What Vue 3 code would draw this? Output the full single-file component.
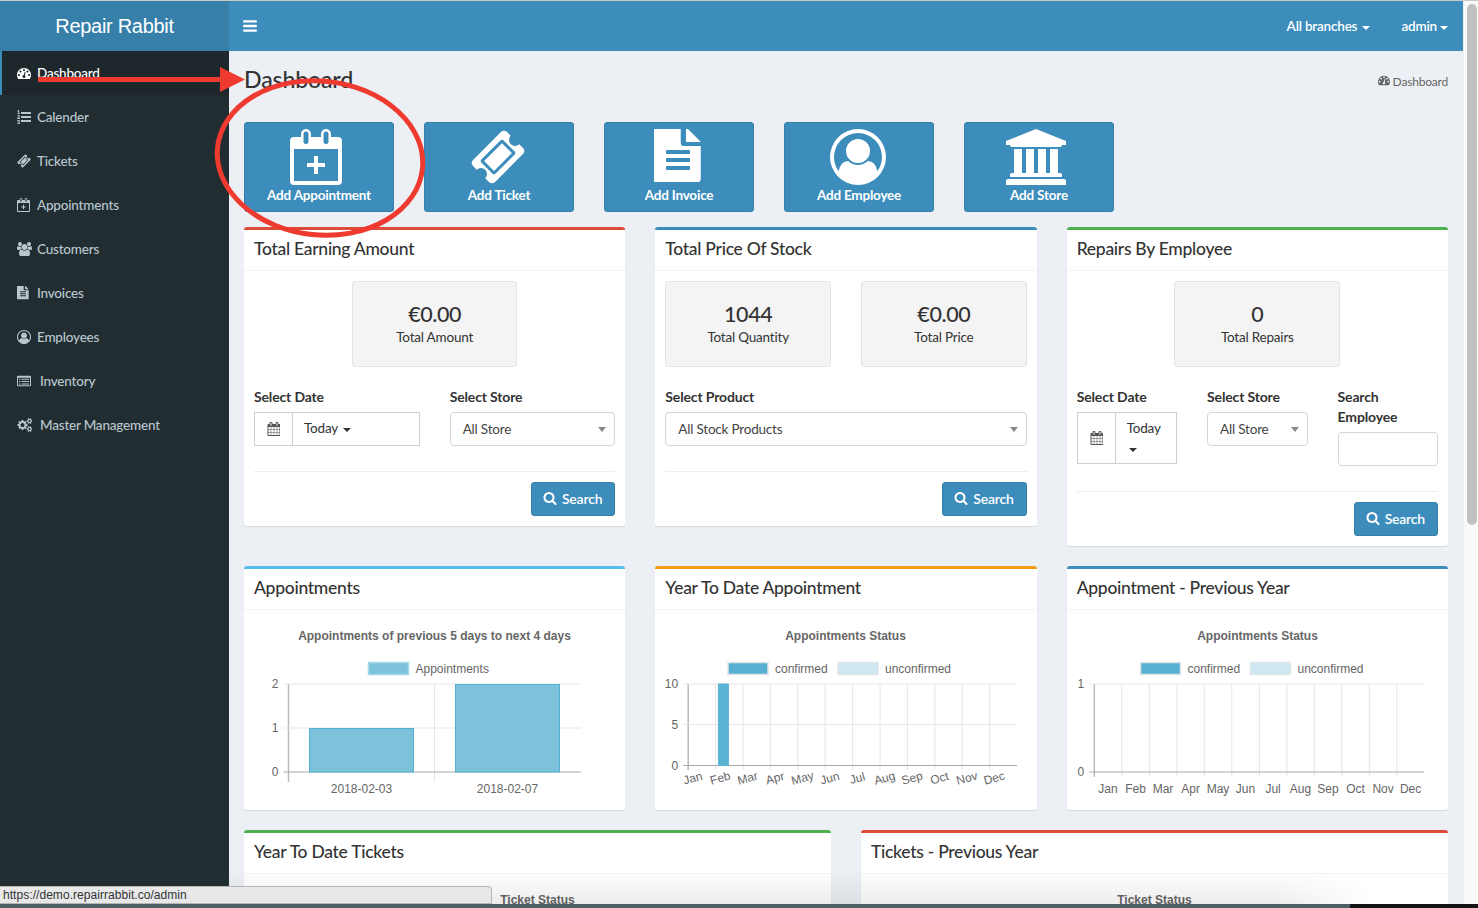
<script setup>
import { h } from 'vue';

// font-awesome style glyphs, all on a 1792 high box
const glyphs = {
  dashboard: [1792, 'M384 1152q0-53-37.5-90.5t-90.5-37.5-90.5 37.5-37.5 90.5 37.5 90.5 90.5 37.5 90.5-37.5 37.5-90.5zm192-448q0-53-37.5-90.5t-90.5-37.5-90.5 37.5-37.5 90.5 37.5 90.5 90.5 37.5 90.5-37.5 37.5-90.5zm428 481l101-382q6-26-7.5-48.5t-38.5-29.5-48 6.5-30 39.5l-101 382q-60 5-107 43.5t-63 98.5q-20 77 20 146t117 89 146-20 89-117q16-60-6-117t-72-91zm660-33q0-53-37.5-90.5t-90.5-37.5-90.5 37.5-37.5 90.5 37.5 90.5 90.5 37.5 90.5-37.5 37.5-90.5zm-640-640q0-53-37.5-90.5t-90.5-37.5-90.5 37.5-37.5 90.5 37.5 90.5 90.5 37.5 90.5-37.5 37.5-90.5zm448 192q0-53-37.5-90.5t-90.5-37.5-90.5 37.5-37.5 90.5 37.5 90.5 90.5 37.5 90.5-37.5 37.5-90.5zm320 448q0 261-141 483-19 29-54 29h-1402q-35 0-54-29-141-221-141-483 0-182 71-348t191-286 286-191 348-71 348 71 286 191 191 286 71 348z'],
  listOl: [1792, 'M381 1620q0 80-54.5 126t-135.5 46q-106 0-172-66l57-88q49 45 106 45 29 0 50.5-14.5t21.5-42.5q0-64-105-56l-26-56q8-10 32.5-43.5t42.5-54 37-38.5v-1q-16 0-48.5 1t-48.5 1v53h-106v-152h333v88l-95 115q51 12 81 49t30 88zm2-627v159h-362q-6-36-6-54 0-51 23.5-93t56.5-68 66-47.5 56.5-43.5 23.5-45q0-25-14.5-38.5t-39.5-13.5q-46 0-81 58l-85-59q24-51 71.5-79.5t105.5-28.5q73 0 123 41.5t50 112.5q0 50-34 91.5t-75 64.5-75.5 50.5-35.5 52.5h127v-60h105zm1409 319v192q0 13-9.5 22.5t-22.5 9.5h-1216q-13 0-22.5-9.5t-9.5-22.5v-192q0-14 9-23t23-9h1216q13 0 22.5 9.5t9.5 22.5zm-1408-899v99h-335v-99h107q0-41 .5-122t.5-121v-12h-2q-8 17-50 54l-71-76 136-127h106v404h108zm1408 387v192q0 13-9.5 22.5t-22.5 9.5h-1216q-13 0-22.5-9.5t-9.5-22.5v-192q0-14 9-23t23-9h1216q13 0 22.5 9.5t9.5 22.5zm0-512v192q0 13-9.5 22.5t-22.5 9.5h-1216q-13 0-22.5-9.5t-9.5-22.5v-192q0-13 9.5-22.5t22.5-9.5h1216q13 0 22.5 9.5t9.5 22.5z'],
  ticket: [1792, 'M1024 452l316 316-572 572-316-316zm-211 979l618-618q19-19 19-45t-19-45l-362-362q-18-18-45-18t-45 18l-618 618q-19 19-19 45t19 45l362 362q18 18 45 18t45-18zm889-637l-907 908q-37 37-90.5 37t-90.5-37l-126-126q56-56 56-136t-56-136-136-56-136 56l-125-126q-37-37-37-90.5t37-90.5l907-906q37-37 90.5-37t90.5 37l125 125q-56 56-56 136t56 136 136 56 136-56l126 125q37 37 37 90.5t-37 90.5z'],
  calendarPlus: [1664, 'M128 256H1536a128 128 0 0 1 128 128V1664a128 128 0 0 1-128 128H128a128 128 0 0 1-128-128V384a128 128 0 0 1 128-128zM128 640V1664H1536V640zM768 864h128v224h224v128h-224v224h-128v-224h-224v-128h224zM352 256V160a160 160 0 0 1 320 0V256H592V160a80 80 0 0 0-160 0V256zM432 256H592V400a80 80 0 0 1-160 0zM992 256V160a160 160 0 0 1 320 0V256H1232V160a80 80 0 0 0-160 0V256zM1072 256H1232V400a80 80 0 0 1-160 0z', 'evenodd'],
  users: [1920, 'M593 896q-162 5-265 128h-134q-82 0-138-40.5t-56-118.5q0-353 124-353 6 0 43.5 21t97.5 42.5 119 21.5q67 0 133-23-5 37-5 66 0 139 81 256zm1071 637q0 120-73 189.5t-194 69.5h-874q-121 0-194-69.5t-73-189.5q0-53 3.5-103.5t14-109 26.5-108.5 43-97.5 62-81 85.5-53.5 111.5-20q10 0 43 21.5t73 48 107 48 135 21.5 135-21.5 107-48 73-48 43-21.5q61 0 111.5 20t85.5 53.5 62 81 43 97.5 26.5 108.5 14 109 3.5 103.5zm-1024-1277q0 106-75 181t-181 75-181-75-75-181 75-181 181-75 181 75 75 181zm704 384q0 159-112.5 271.5t-271.5 112.5-271.5-112.5-112.5-271.5 112.5-271.5 271.5-112.5 271.5 112.5 112.5 271.5zm576 225q0 78-56 118.5t-138 40.5h-134q-103-123-265-128 81-117 81-256 0-29-5-66 66 23 133 23 59 0 119-21.5t97.5-42.5 43.5-21q124 0 124 353zm-128-609q0 106-75 181t-181 75-181-75-75-181 75-181 181-75 181 75 75 181z'],
  file: [1536, 'M1468 380q14 14 28 36h-472v-472q22 14 36 28zm-476 164h504v1056q0 40-28 68t-68 28h-1344q-40 0-68-28t-28-68v-1600q0-40 28-68t68-28h800v544q0 40 28 68t68 28zm160 736v-64q0-14-9-23t-23-9h-704q-14 0-23 9t-9 23v64q0 14 9 23t23 9h704q14 0 23-9t9-23zm0-256v-64q0-14-9-23t-23-9h-704q-14 0-23 9t-9 23v64q0 14 9 23t23 9h704q14 0 23-9t9-23zm0-256v-64q0-14-9-23t-23-9h-704q-14 0-23 9t-9 23v64q0 14 9 23t23 9h704q14 0 23-9t9-23z'],
  userCircle: [1792, 'M896 0q182 0 348 71t286 191 191 286 71 348q0 181-70.5 347t-190.5 286-286 191.5-349 71.5-349-71-285.5-191.5-190.5-286-71-347.5 71-348 191-286 286-191 348-71zm619 1351q149-205 149-455 0-156-61-298t-164-245-245-164-298-61-298 61-245 164-164 245-61 298q0 250 149 455 66-327 306-327 131 128 313 128t313-128q240 0 306 327zm-235-647q0-159-112.5-271.5t-271.5-112.5-271.5 112.5-112.5 271.5 112.5 271.5 271.5 112.5 271.5-112.5 112.5-271.5z'],
  listAlt: [1792, 'M128 224H1664a128 128 0 0 1 128 128V1440a128 128 0 0 1-128 128H128a128 128 0 0 1-128-128V352a128 128 0 0 1 128-128zM128 480V1440H1664V480zM256 592h192v128H256zM576 592h960v128H576zM256 896h192v128H256zM576 896h960v128H576zM256 1200h192v128H256zM576 1200h960v128H576z', 'evenodd'],
  cogs: [1920, 'M960 896q0-106-75-181t-181-75-181 75-75 181 75 181 181 75 181-75 75-181zm768 512q0-52-38-90t-90-38-90 38-38 90q0 53 37.5 90.5t90.5 37.5 90.5-37.5 37.5-90.5zm0-1024q0-52-38-90t-90-38-90 38-38 90q0 53 37.5 90.5t90.5 37.5 90.5-37.5 37.5-90.5zm-384 421v185q0 10-7 19.5t-16 10.5l-155 24q-11 35-32 76 34 48 90 115 7 11 7 20 0 12-7 19-23 30-82.5 89.5t-78.5 59.5q-11 0-21-7l-115-90q-37 19-77 31-11 108-23 155-7 24-30 24h-186q-11 0-20-7.5t-10-17.5l-23-153q-34-10-75-31l-118 89q-7 7-20 7-11 0-21-8-144-133-144-160 0-9 7-19 10-14 41-53t47-61q-23-44-35-82l-152-24q-10-1-17-9.5t-7-19.5v-185q0-10 7-19.5t16-10.5l155-24q11-35 32-76-34-48-90-115-7-11-7-20 0-12 7-20 22-30 82-89t79-59q11 0 21 7l115 90q34-18 77-32 11-108 23-154 7-24 30-24h186q11 0 20 7.5t10 17.5l23 153q34 10 75 31l118-89q8-7 20-7 11 0 21 8 144 133 144 160 0 8-7 19-12 16-42 54t-45 60q23 48 34 82l152 23q10 2 17 10.5t7 19.5zm640 533v140q0 16-149 31-12 27-30 52 51 113 51 138 0 4-4 7-122 71-124 71-8 0-46-47t-52-68q-20 2-30 2t-30-2q-14 21-52 68t-46 47q-2 0-124-71-4-3-4-7 0-25 51-138-18-25-30-52-149-15-149-31v-140q0-16 149-31 13-29 30-52-51-113-51-138 0-4 4-7 4-2 35-20t59-34 30-16q8 0 46 46.5t52 67.5q20-2 30-2t30 2q51-71 92-112l6-2q4 0 124 70 4 3 4 7 0 25-51 138 17 23 30 52 149 15 149 31zm0-1024v140q0 16-149 31-12 27-30 52 51 113 51 138 0 4-4 7-122 71-124 71-8 0-46-47t-52-68q-20 2-30 2t-30-2q-14 21-52 68t-46 47q-2 0-124-71-4-3-4-7 0-25 51-138-18-25-30-52-149-15-149-31v-140q0-16 149-31 13-29 30-52-51-113-51-138 0-4 4-7 4-2 35-20t59-34 30-16q8 0 46 46.5t52 67.5q20-2 30-2t30 2q51-71 92-112l6-2q4 0 124 70 4 3 4 7 0 25-51 138 17 23 30 52 149 15 149 31z'],
  bars: [1792, 'M1664 1344v128q0 26-19 45t-45 19h-1408q-26 0-45-19t-19-45v-128q0-26 19-45t45-19h1408q26 0 45 19t19 45zm0-512v128q0 26-19 45t-45 19h-1408q-26 0-45-19t-19-45v-128q0-26 19-45t45-19h1408q26 0 45 19t19 45zm0-512v128q0 26-19 45t-45 19h-1408q-26 0-45-19t-19-45v-128q0-26 19-45t45-19h1408q26 0 45 19t19 45z'],
  search: [1792, 'M1216 832q0-185-131.5-316.5t-316.5-131.5-316.5 131.5-131.5 316.5 131.5 316.5 316.5 131.5 316.5-131.5 131.5-316.5zm512 832q0 52-38 90t-90 38q-54 0-90-38l-343-342q-179 124-399 124-143 0-273.5-55.5t-225-150-150-225-55.5-273.5 55.5-273.5 150-225 225-150 273.5-55.5 273.5 55.5 225 150 150 225 55.5 273.5q0 220-124 399l343 343q37 37 37 90z'],
  calendar: [1664, 'M192 1664h288v-288h-288v288zm352 0h320v-288h-320v288zm-352-352h288v-320h-288v320zm352 0h320v-320h-320v320zm-352-384h288v-288h-288v288zm736 736h320v-288h-320v288zm-384-736h320v-288h-320v288zm768 736h288v-288h-288v288zm-384-352h320v-320h-320v320zm-352-864v-288q0-13-9.5-22.5t-22.5-9.5h-64q-13 0-22.5 9.5t-9.5 22.5v288q0 13 9.5 22.5t22.5 9.5h64q13 0 22.5-9.5t9.5-22.5zm736 864h288v-320h-288v320zm-384-384h320v-288h-320v288zm384 0h288v-288h-288v288zm32-480v-288q0-13-9.5-22.5t-22.5-9.5h-64q-13 0-22.5 9.5t-9.5 22.5v288q0 13 9.5 22.5t22.5 9.5h64q13 0 22.5-9.5t9.5-22.5zm384-64v1280q0 52-38 90t-90 38h-1408q-52 0-90-38t-38-90v-1280q0-52 38-90t90-38h128v-96q0-66 47-113t113-47h64q66 0 113 47t47 113v96h384v-96q0-66 47-113t113-47h64q66 0 113 47t47 113v96h128q52 0 90 38t38 90z'],
  bank: [2048, 'M960 0l960 384v128h-128q0 26-20.5 45t-48.5 19h-1526q-28 0-48.5-19t-20.5-45h-128v-128zm-704 640h256v768h128v-768h256v768h128v-768h256v768h128v-768h256v768h59q28 0 48.5 19t20.5 45v64h-1664v-64q0-26 20.5-45t48.5-19h59v-768zm1595 960q28 0 48.5 19t20.5 45v128h-1920v-128q0-26 20.5-45t48.5-19h1782z'],
};

const Icon = (props) => {
  const [w, d, rule] = glyphs[props.name];
  return h('svg', {
    width: (props.size * w) / 1792,
    height: props.size,
    viewBox: `0 0 ${w} 1792`,
    fill: 'currentColor',
  }, [h('path', { d, 'fill-rule': rule || 'nonzero' })]);
};
Icon.props = ['name', 'size'];

const menu = [
  { label: 'Dashboard', icon: 'dashboard', active: true },
  { label: 'Calender', icon: 'listOl' },
  { label: 'Tickets', icon: 'ticket' },
  { label: 'Appointments', icon: 'calendarPlus' },
  { label: 'Customers', icon: 'users' },
  { label: 'Invoices', icon: 'file' },
  { label: 'Employees', icon: 'userCircle' },
  { label: 'Inventory', icon: 'listAlt', wide: true },
  { label: 'Master Management', icon: 'cogs', wide: true },
];

const shortcuts = [
  { label: 'Add Appointment', icon: 'calendarPlus' },
  { label: 'Add Ticket', icon: 'ticket' },
  { label: 'Add Invoice', icon: 'file' },
  { label: 'Add Employee', icon: 'userCircle' },
  { label: 'Add Store', icon: 'bank' },
];

const months = ['Jan', 'Feb', 'Mar', 'Apr', 'May', 'Jun', 'Jul', 'Aug', 'Sep', 'Oct', 'Nov', 'Dec'];
const confirmed = { fill: '#58b1d1', stroke: '#dfe5e8' };
const unconfirmed = { fill: '#cfe8f3', stroke: '#dfe5e8' };

function monthChart(title, left, right, yTicks, bars, legendX, tilted, tickEnd) {
  const step = (right - left) / 12;
  return {
    title, left, right, yTicks, bars, tickEnd,
    legend: [
      { x: legendX, label: 'confirmed', ...confirmed },
      { x: legendX + 110, label: 'unconfirmed', ...unconfirmed },
    ],
    vLines: Array.from({ length: 12 }, (_, i) => left + step * i),
    xLabels: months.map((text, i) => tilted
      ? { text, x: left + step * (i + 0.5) - 8, y: 172, rotate: -15 }
      : { text, x: left + step * (i + 0.5), y: 183, rotate: 0 }),
  };
}

const charts = [
  {
    title: 'Appointments of previous 5 days to next 4 days',
    left: 44.5,
    right: 337,
    tickEnd: 172,
    legend: [{ x: 124.500, label: 'Appointments', fill: '#7cc2da', stroke: '#a5d8e8' }],
    yTicks: [{ y: 74, text: '2' }, { y: 118, text: '1' }, { y: 162, text: '0' }],
    vLines: [44.5, 190.5],
    bars: [
      { x: 65.5, w: 104, y: 118.5, h: 43.5, fill: '#7cc2da', stroke: '#53b0d0' },
      { x: 211.5, w: 104, y: 74.5, h: 87.5, fill: '#7cc2da', stroke: '#53b0d0' },
    ],
    xLabels: [
      { text: '2018-02-03', x: 117.5, y: 183, rotate: 0 },
      { text: '2018-02-07', x: 263.5, y: 183, rotate: 0 },
    ],
  },
  monthChart('Appointments Status', 33.2, 362, [
    { y: 74, text: '10' }, { y: 114.5, text: '5' }, { y: 155.5, text: '0' },
  ], [{ x: 63.4, w: 10, y: 74, h: 81.5, fill: '#5ab3d3', stroke: '#5ab3d3' }], 73, true, 160),
  monthChart('Appointments Status', 27.3, 357.3, [
    { y: 74, text: '1' }, { y: 162, text: '0' },
  ], [], 73.5, false, 167),
];

const chartBoxes = [
  { title: 'Appointments', color: '#55bdf0', chart: charts[0] },
  { title: 'Year To Date Appointment', color: '#f39c12', chart: charts[1] },
  { title: 'Appointment - Previous Year', color: '#3c8dbc', chart: charts[2] },
];
</script>

<template>
  <div class="page">
    <div class="chrome-top"></div>
    <div class="shell">
      <aside class="sidebar">
        <div class="logo">Repair Rabbit</div>
        <nav>
          <a v-for="item in menu" :key="item.label" class="menu-item" :class="{ active: item.active, wide: item.wide }">
            <span class="menu-icon"><Icon :name="item.icon" :size="14" /></span>
            <span>{{ item.label }}</span>
          </a>
        </nav>
      </aside>

      <main class="main">
        <header class="navbar">
          <Icon class="toggle" name="bars" :size="16" />
          <div class="nav-right">
            <span class="nav-link">All branches <i class="caret"></i></span>
            <span class="nav-link">admin<i class="caret tight"></i></span>
          </div>
        </header>

        <div class="content">
          <div class="content-head">
            <h1>Dashboard</h1>
            <span class="crumb"><Icon name="dashboard" :size="12" /> Dashboard</span>
          </div>

          <div class="shortcuts">
            <a v-for="s in shortcuts" :key="s.label" class="shortcut">
              <Icon :name="s.icon" :size="56" />
              <span>{{ s.label }}</span>
            </a>
          </div>

          <div class="grid-3 first-row">
            <section class="box" style="border-top-color: #dd4b39">
              <h3 class="box-title">Total Earning Amount</h3>
              <div class="box-body">
                <div class="stats">
                  <div class="stat"><strong>€0.00</strong><span>Total Amount</span></div>
                </div>
                <div class="fields">
                  <div class="field">
                    <label>Select Date</label>
                    <div class="date-group">
                      <span class="date-icon"><Icon name="calendar" :size="14" /></span>
                      <span class="date-btn">Today <i class="caret dark"></i></span>
                    </div>
                  </div>
                  <div class="field">
                    <label>Select Store</label>
                    <div class="select">All Store<i class="arrow"></i></div>
                  </div>
                </div>
                <hr />
                <div class="actions"><button class="btn"><Icon name="search" :size="14" /> Search</button></div>
              </div>
            </section>

            <section class="box" style="border-top-color: #3c8dbc">
              <h3 class="box-title">Total Price Of Stock</h3>
              <div class="box-body">
                <div class="stats">
                  <div class="stat"><strong>1044</strong><span>Total Quantity</span></div>
                  <div class="stat"><strong>€0.00</strong><span>Total Price</span></div>
                </div>
                <div class="fields">
                  <div class="field">
                    <label>Select Product</label>
                    <div class="select">All Stock Products<i class="arrow"></i></div>
                  </div>
                </div>
                <hr />
                <div class="actions"><button class="btn"><Icon name="search" :size="14" /> Search</button></div>
              </div>
            </section>

            <section class="box" style="border-top-color: #4caf50">
              <h3 class="box-title">Repairs By Employee</h3>
              <div class="box-body">
                <div class="stats">
                  <div class="stat"><strong>0</strong><span>Total Repairs</span></div>
                </div>
                <div class="fields">
                  <div class="field">
                    <label>Select Date</label>
                    <div class="date-group">
                      <span class="date-icon"><Icon name="calendar" :size="14" /></span>
                      <span class="date-btn">Today <i class="caret dark"></i></span>
                    </div>
                  </div>
                  <div class="field">
                    <label>Select Store</label>
                    <div class="select">All Store<i class="arrow"></i></div>
                  </div>
                  <div class="field">
                    <label>Search Employee</label>
                    <input class="text-input" type="text" />
                  </div>
                </div>
                <hr />
                <div class="actions"><button class="btn"><Icon name="search" :size="14" /> Search</button></div>
              </div>
            </section>
          </div>

          <div class="grid-3 chart-row">
            <section v-for="b in chartBoxes" :key="b.title" class="box" :style="{ borderTopColor: b.color }">
              <h3 class="box-title">{{ b.title }}</h3>
              <svg class="chart" width="100%" height="200">
                <text class="chart-title" :x="190.5" y="30" text-anchor="middle">{{ b.chart.title }}</text>
                <g v-for="l in b.chart.legend" :key="l.label">
                  <rect :x="l.x" y="52.5" width="40" height="12" :fill="l.fill" :stroke="l.stroke" stroke-width="1.5" />
                  <text class="chart-text" :x="l.x + 47" y="63">{{ l.label }}</text>
                </g>
                <line v-for="(x, i) in b.chart.vLines" :key="'v' + i" :x1="x" :x2="x" y1="74" :y2="b.chart.tickEnd"
                  :stroke="i === 0 ? '#bbb' : '#e6e6e6'" :stroke-width="i === 0 ? 1.5 : 1" />
                <g v-for="t in b.chart.yTicks" :key="t.text">
                  <line :x1="b.chart.left - 5" :x2="b.chart.right" :y1="t.y" :y2="t.y"
                    :stroke="t.text === '0' ? '#a8a8a8' : '#e6e6e6'" />
                  <text class="chart-text" :x="b.chart.left - 10" :y="t.y + 4" text-anchor="end">{{ t.text }}</text>
                </g>
                <rect v-for="(bar, i) in b.chart.bars" :key="'b' + i" :x="bar.x" :y="bar.y" :width="bar.w" :height="bar.h"
                  :fill="bar.fill" :stroke="bar.stroke" />
                <text v-for="t in b.chart.xLabels" :key="t.text" class="chart-text" :x="t.x" :y="t.y" text-anchor="middle"
                  :transform="t.rotate ? `rotate(${t.rotate} ${t.x} ${t.y})` : null">{{ t.text }}</text>
              </svg>
            </section>
          </div>

          <div class="grid-2">
            <section class="box" style="border-top-color: #4caf50">
              <h3 class="box-title">Year To Date Tickets</h3>
              <div class="ticket-status">Ticket Status</div>
            </section>
            <section class="box" style="border-top-color: #dd4b39">
              <h3 class="box-title">Tickets - Previous Year</h3>
              <div class="ticket-status">Ticket Status</div>
            </section>
          </div>
        </div>
      </main>

      <div class="scrollbar"><div class="thumb"></div></div>
    </div>

    <!-- hand drawn annotation on top of the screenshot -->
    <svg class="annotation" width="1478" height="908">
      <ellipse cx="320" cy="158" rx="103" ry="77" fill="none" stroke="#ee3a2f" stroke-width="5" transform="rotate(6 320 158)" />
      <path d="M38 77H220V67L245 79.500 220 92V82H38z" fill="#ee3a2f" />
    </svg>

    <div class="bottom-fade"></div>
    <div class="status-url">https://demo.repairrabbit.co/admin</div>
    <div class="chrome-bottom"></div>
  </div>
</template>

<style>
html, body {
  margin: 0;
  overflow: hidden;
}
</style>

<style scoped>
.page {
  position: relative;
  display: flex;
  flex-direction: column;
  width: 1478px;
  height: 908px;
  overflow: hidden;
  background: #ecf0f5;
  color: #333;
  font-family: Lato, "Noto Sans", sans-serif;
  font-size: 13.5px;
  letter-spacing: -0.2px;
}
.chrome-top {
  flex: none;
  height: 1px;
  background: #c8c8c8;
}
.shell {
  flex: 1;
  display: flex;
  min-height: 0;
}

.sidebar {
  flex: none;
  width: 229px;
  background: #222d32;
}
.logo {
  height: 50px;
  line-height: 50px;
  text-align: center;
  background: #367fa9;
  color: #fff;
  font-family: "Liberation Sans", sans-serif;
  font-size: 20px;
  letter-spacing: -0.3px;
}
.menu-item {
  display: flex;
  align-items: center;
  box-sizing: border-box;
  height: 44px;
  padding: 0 0 0 17px;
  color: #b8c7ce;
  font-weight: 500;
}
.menu-item.active {
  padding-left: 15px;
  border-left: 2px solid #3c8dbc;
  background: #1e282c;
  color: #fff;
}
.menu-icon {
  display: flex;
  flex: none;
  width: 20px;
}
.menu-item.wide .menu-icon {
  width: 23px;
}

.main {
  flex: 1;
  min-width: 0;
}
.navbar {
  display: flex;
  align-items: center;
  justify-content: space-between;
  box-sizing: border-box;
  height: 50px;
  padding: 0 15px 0 13px;
  background: #3c8dbc;
  color: #fff;
}
.nav-right {
  display: flex;
  gap: 31px;
}
.nav-link {
  font-weight: 600;
}
.caret {
  display: inline-block;
  width: 0;
  height: 0;
  margin-left: 2px;
  vertical-align: middle;
  border-top: 4px solid currentColor;
  border-left: 4px solid transparent;
  border-right: 4px solid transparent;
}
.caret.tight {
  margin-left: 3px;
}
.caret.dark {
  color: #333;
}

.content {
  padding: 0 15px;
}
.content-head {
  display: flex;
  align-items: center;
  justify-content: space-between;
  height: 71px;
  padding-bottom: 11px;
  box-sizing: border-box;
}
h1 {
  margin: 0 0 4px 0;
  font-size: 23.2px;
  font-weight: 500;
}
.crumb {
  color: #666;
  font-size: 12px;
}
.shortcuts {
  display: flex;
  gap: 30px;
  margin-bottom: 15px;
}
.shortcut {
  display: flex;
  flex-direction: column;
  align-items: center;
  box-sizing: border-box;
  width: 150px;
  height: 90px;
  padding-top: 6px;
  background: #3c8dbc;
  border: 1px solid #367fa9;
  border-radius: 3px;
  color: #fff;
  font-weight: 700;
}
.shortcut svg {
  margin-right: 2px;
}
.shortcut:first-child svg {
  margin-right: 6px;
}
.shortcut span {
  margin-top: 2px;
}

.grid-3 {
  display: grid;
  grid-template-columns: repeat(3, 1fr);
  gap: 30px;
  align-items: start;
}
.grid-2 {
  display: grid;
  grid-template-columns: repeat(2, 1fr);
  gap: 30px;
}
.first-row,
.chart-row {
  margin-bottom: 20px;
}

.box {
  background: #fff;
  border-top: 3px solid #d2d6de;
  border-radius: 3px;
  box-shadow: 0 1px 1px rgba(0, 0, 0, 0.1);
}
.box-title {
  margin: 0;
  box-sizing: border-box;
  height: 41px;
  padding: 0 10px;
  line-height: 38px;
  border-bottom: 1px solid #f4f4f4;
  font-size: 17.5px;
  font-weight: 500;
  letter-spacing: -0.28px;
}
.box-body {
  padding: 10px;
}
.stats {
  display: flex;
  justify-content: center;
  gap: 30px;
  margin-bottom: 20px;
}
.stat {
  display: flex;
  flex-direction: column;
  align-items: center;
  box-sizing: border-box;
  width: calc((100% - 30px) / 2);
  height: 86px;
  padding-top: 17px;
  background: #f4f4f4;
  border: 1px solid #e3e3e3;
  border-radius: 3px;
}
.stat strong {
  font-size: 21.5px;
  font-weight: 500;
  letter-spacing: -0.4px;
  line-height: 30px;
}
.stat span {
  margin-top: 0;
}
.fields {
  display: flex;
  gap: 30px;
  margin-bottom: 25px;
}
.field {
  flex: 1 1 0;
  min-width: 0;
}
label {
  display: block;
  margin-bottom: 5px;
  line-height: 20px;
  font-size: 14px;
  font-weight: 700;
  letter-spacing: -0.15px;
}
.date-group {
  display: flex;
  border: 1px solid #ccd0d6;
}
.date-icon {
  display: flex;
  flex: none;
  align-items: center;
  justify-content: center;
  width: 37px;
  color: #555;
  border-right: 1px solid #ccd0d6;
}
.date-btn {
  box-sizing: border-box;
  min-height: 32px;
  padding: 5px 11px;
  line-height: 20px;
}
.select {
  position: relative;
  box-sizing: border-box;
  height: 34px;
  padding-left: 12px;
  line-height: 32px;
  color: #444;
  border: 1px solid #d2d6de;
  border-radius: 4px;
}
.arrow {
  position: absolute;
  top: 14px;
  right: 8px;
  border-top: 5px solid #888;
  border-left: 4px solid transparent;
  border-right: 4px solid transparent;
}
.text-input {
  display: block;
  box-sizing: border-box;
  width: 100%;
  height: 34px;
  border: 1px solid #d2d6de;
  border-radius: 4px;
}
hr {
  margin: 0 0 10px;
  border: 0;
  border-top: 1px solid #eee;
}
.actions {
  display: flex;
  justify-content: flex-end;
}
.btn {
  display: flex;
  align-items: center;
  gap: 5px;
  box-sizing: border-box;
  height: 34px;
  padding: 0 12px 2px 11px;
  background: #3c8dbc;
  border: 1px solid #367fa9;
  border-radius: 3px;
  color: #fff;
  font: 600 14px Lato, "Noto Sans", sans-serif;
  letter-spacing: -0.2px;
}

.chart {
  display: block;
  font-family: "Liberation Sans", Arial, sans-serif;
  font-size: 12px;
  letter-spacing: 0;
}
.chart-title {
  font-weight: 700;
  fill: #666;
}
.chart-text {
  fill: #666;
}
.ticket-status {
  padding-top: 19px;
  text-align: center;
  color: #666;
  font: 700 12px "Liberation Sans", Arial, sans-serif;
  letter-spacing: 0;
}

.scrollbar {
  flex: none;
  width: 15px;
  background: #fafafa;
  border-left: 1px solid #ececec;
  box-sizing: border-box;
}
.thumb {
  width: 10px;
  height: 521px;
  margin: 3px 0 0 3px;
  background: #c1c1c1;
  border-radius: 5px;
}

.annotation {
  position: absolute;
  top: 0;
  left: 0;
  pointer-events: none;
}
.bottom-fade {
  position: absolute;
  left: 229px;
  bottom: 4px;
  width: 1141px;
  height: 34px;
  background: linear-gradient(to bottom, rgba(0, 0, 0, 0), rgba(0, 0, 0, 0.07));
  -webkit-mask-image: linear-gradient(to right, #000 92%, transparent);
  mask-image: linear-gradient(to right, #000 92%, transparent);
}
.status-url {
  position: absolute;
  left: 0;
  bottom: 4px;
  box-sizing: border-box;
  width: 492px;
  height: 18px;
  padding-left: 3px;
  background: #e8e8e8;
  border: 1px solid #b5b5b5;
  border-left: 0;
  border-radius: 0 4px 0 0;
  color: #333;
  font: 12px/17px "Liberation Sans", Arial, sans-serif;
  letter-spacing: 0.05px;
}
.chrome-bottom {
  position: absolute;
  left: 0;
  right: 0;
  bottom: 0;
  height: 4px;
  background: linear-gradient(to right, #4e5f62 1350px, #141414 1350px);
}
</style>
